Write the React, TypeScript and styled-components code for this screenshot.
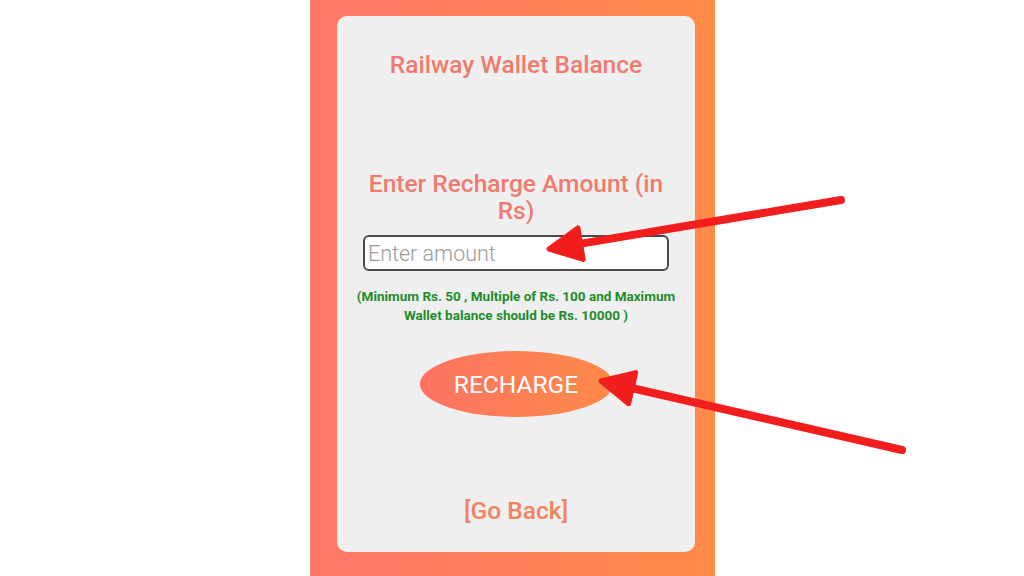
import React from "react";
import styled, { createGlobalStyle } from "styled-components";

const GlobalStyle = createGlobalStyle`
  html, body {
    margin: 0;
    padding: 0;
    background: #ffffff;
    font-family: Roboto, "Noto Sans", Arial, sans-serif;
  }
`;

const Page = styled.div`
  position: relative;
  width: 1024px;
  height: 576px;
  overflow: hidden;
  display: flex;
  justify-content: center;
  padding-left: 1px;
  box-sizing: border-box;
`;

const Phone = styled.div`
  width: 405px;
  height: 576px;
  box-sizing: border-box;
  padding: 16px 20px 24px 27px;
  background: linear-gradient(90deg, #ff776a 0%, #ff8a48 100%);
  display: flex;
`;

const Card = styled.div`
  flex: 1;
  background: #efefef;
  border-radius: 10px;
  display: flex;
  flex-direction: column;
  align-items: center;
  padding-top: 35px;
`;

const Title = styled.div`
  font-size: 24.5px;
  font-weight: 500;
  line-height: 28px;
  color: #ef7b70;
  text-align: center;
`;

const Heading = styled.div`
  margin-top: 91px;
  width: 310px;
  font-size: 24.5px;
  font-weight: 500;
  line-height: 27px;
  color: #ef7b70;
  text-align: center;
`;

const AmountInput = styled.input`
  margin-top: 11px;
  width: 306px;
  height: 36px;
  box-sizing: border-box;
  border: 2px solid #4a4a4a;
  border-radius: 6px;
  background: #ffffff;
  padding: 0 3px;
  font-family: Roboto, Arial, sans-serif;
  font-size: 21.5px;
  font-weight: 300;
  color: #333;
  outline: none;

  &::placeholder {
    color: #9a9a9a;
  }
`;

const Hint = styled.div`
  margin-top: 16px;
  width: 330px;
  font-size: 13.5px;
  font-weight: 700;
  line-height: 19px;
  color: #1f8c2a;
  text-align: center;
`;

const RechargeButton = styled.button`
  margin-top: 26px;
  width: 193px;
  height: 66px;
  border: none;
  border-radius: 50%;
  background: linear-gradient(90deg, #fe7364 0%, #fd8a48 100%);
  color: #ffffff;
  font-family: Roboto, Arial, sans-serif;
  font-size: 24.5px;
  font-weight: 400;
  cursor: pointer;
`;

const GoBack = styled.a`
  margin-top: 80px;
  font-size: 24.5px;
  font-weight: 500;
  line-height: 28px;
  color: #f0845e;
  text-decoration: none;
  cursor: pointer;
`;

const Overlay = styled.svg`
  position: absolute;
  left: 0;
  top: 0;
  pointer-events: none;
`;

type ArrowProps = { x1: number; y1: number; x2: number; y2: number };

const Arrow = ({ x1, y1, x2, y2 }: ArrowProps) => {
  const dx = x2 - x1;
  const dy = y2 - y1;
  const len = Math.hypot(dx, dy);
  const ux = dx / len;
  const uy = dy / len;
  const headLen = 32;
  const headW = 16;
  const bx = x2 - ux * headLen;
  const by = y2 - uy * headLen;
  const px = -uy;
  const py = ux;
  const pts = `${x2},${y2} ${bx + px * headW},${by + py * headW} ${bx - px * headW},${by - py * headW}`;
  return (
    <g>
      <line x1={x1} y1={y1} x2={bx + ux * 4} y2={by + uy * 4} stroke="#f21d1d" strokeWidth={8} strokeLinecap="round" />
      <polygon points={pts} fill="#f21d1d" stroke="#f21d1d" strokeWidth={5} strokeLinejoin="round" />
    </g>
  );
};

export default function App() {
  return (
    <>
      <GlobalStyle />
      <Page>
        <Phone>
          <Card>
            <Title>Railway Wallet Balance</Title>
            <Heading>Enter Recharge Amount (in Rs)</Heading>
            <AmountInput placeholder="Enter amount" />
            <Hint>
              (Minimum Rs. 50 , Multiple of Rs. 100 and Maximum Wallet balance should be Rs. 10000 )
            </Hint>
            <RechargeButton>RECHARGE</RechargeButton>
            <GoBack>[Go Back]</GoBack>
          </Card>
        </Phone>
        <Overlay width={1024} height={576} viewBox="0 0 1024 576">
          <Arrow x1={841} y1={200} x2={549} y2={249} />
          <Arrow x1={902} y1={450} x2={601} y2={381} />
        </Overlay>
      </Page>
    </>
  );
}
